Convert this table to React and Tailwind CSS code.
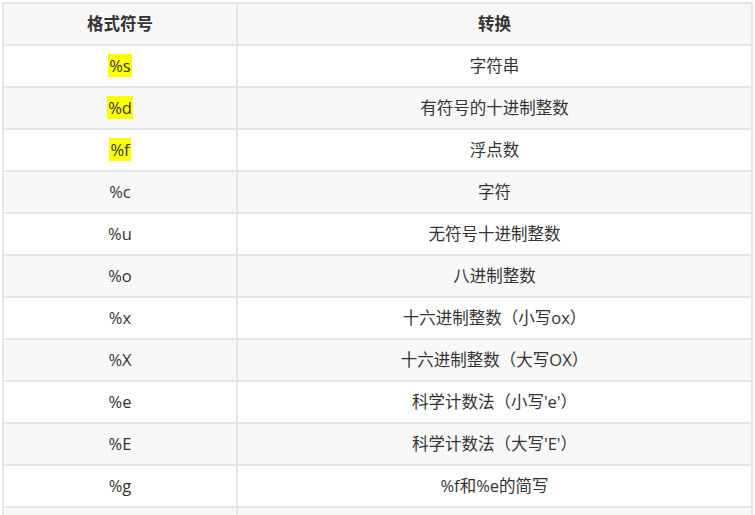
import React from 'react';

const rows = [
  { fmt: '%s', desc: '字符串', mark: true },
  { fmt: '%d', desc: '有符号的十进制整数', mark: true },
  { fmt: '%f', desc: '浮点数', mark: true },
  { fmt: '%c', desc: '字符' },
  { fmt: '%u', desc: '无符号十进制整数' },
  { fmt: '%o', desc: '八进制整数' },
  { fmt: '%x', desc: '十六进制整数（小写ox）' },
  { fmt: '%X', desc: '十六进制整数（大写OX）' },
  { fmt: '%e', desc: "科学计数法（小写'e'）" },
  { fmt: '%E', desc: "科学计数法（大写'E'）" },
  { fmt: '%g', desc: '%f和%e的简写' },
  { fmt: '', desc: '' },
];

const App = () => {
  return (
    <div
      className="w-[755px] h-[515px] overflow-hidden bg-white pl-[2px] pt-[2px]"
      style={{ fontFamily: '"Open Sans", "Noto Sans CJK SC", sans-serif' }}
    >
      <table className="table-fixed border-collapse w-[751px] text-[16.5px] text-[#333]">
        <colgroup>
          <col className="w-[234px]" />
          <col />
        </colgroup>
        <thead>
          <tr className="h-[42px] bg-[#f7f7f7]">
            <th className="border-2 border-[#e6e6e6] font-bold text-center">格式符号</th>
            <th className="border-2 border-[#e6e6e6] font-bold text-center">转换</th>
          </tr>
        </thead>
        <tbody>
          {rows.map((r, i) => (
            <tr key={i} className={`h-[42px] ${i % 2 === 1 ? 'bg-[#f8f8f8]' : 'bg-white'}`}>
              <td className="border-2 border-[#e6e6e6] text-center">
                {r.mark ? <span className="bg-[#ffff00] px-[1px]">{r.fmt}</span> : r.fmt}
              </td>
              <td className="border-2 border-[#e6e6e6] text-center">{r.desc}</td>
            </tr>
          ))}
        </tbody>
      </table>
    </div>
  );
};

export default App;
